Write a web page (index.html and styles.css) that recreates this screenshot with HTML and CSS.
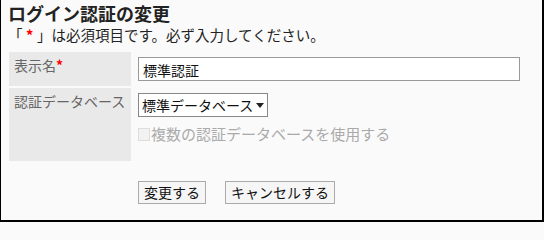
FILE: index.html
```html
<!DOCTYPE html>
<html lang="ja">
<head>
<meta charset="utf-8">
<link rel="stylesheet" href="styles.css">
</head>
<body>
<div class="frame">
  <h1 class="title">ログイン認証の変更</h1>
  <p class="note">「<span class="req wide">*</span>」は必須項目です。必ず入力してください。</p>
  <div class="form">
    <div class="label">表示名<span class="req">*</span></div>
    <div class="value"><div class="input">標準認証</div></div>
    <div class="label">認証データベース</div>
    <div class="value">
      <div class="select">標準データベース<span class="arrow"></span></div>
      <div class="check"><span class="box"></span>複数の認証データベースを使用する</div>
    </div>
  </div>
  <div class="buttons">
    <div class="btn">変更する</div>
    <div class="btn">キャンセルする</div>
  </div>
</div>
</body>
</html>
```

FILE: styles.css
```css
html, body {
  margin: 0;
  padding: 0;
  background: #fafafa;
}
body {
  font-family: "Noto Sans CJK JP", "Noto Sans", sans-serif;
  font-size: 14px;
  color: #222;
}
.frame {
  box-sizing: border-box;
  width: 544px;
  height: 222px;
  border-left: 1px solid #000;
  border-right: 2px solid #000;
  border-bottom: 2px solid #000;
  padding: 2px 0 0 7px;
  background: #fafafa;
}
.title {
  margin: 0;
  font-size: 18px;
  font-weight: bold;
  line-height: 22px;
  color: #222;
}
.note {
  margin: 0;
  padding-top: 1px;
  font-size: 14.5px;
  line-height: 20px;
  color: #222;
  white-space: nowrap;
}
.req {
  color: #f00;
  font-weight: bold;
}
.wide {
  display: inline-block;
  width: 14.5px;
  text-align: center;
}
.form {
  display: grid;
  grid-template-columns: 122px 1fr;
  grid-template-rows: 34px 73px;
  column-gap: 7px;
  row-gap: 2px;
  margin-top: 7px;
  margin-left: 1px;
}
.label {
  background: #e9e9e9;
  color: #666;
  padding: 3px 0 0 5px;
  line-height: 20px;
  white-space: nowrap;
}
.value {
  padding-top: 5px;
}
.input {
  box-sizing: border-box;
  width: 382px;
  height: 24px;
  border: 1px solid #999;
  background: #fff;
  padding: 3px 0 0 4px;
  line-height: 18px;
  color: #111;
}
.select {
  box-sizing: border-box;
  display: flex;
  align-items: center;
  width: 130px;
  height: 24px;
  border: 1px solid #888;
  background: #fff;
  padding: 0 0 0 3px;
  line-height: 18px;
  color: #111;
  white-space: nowrap;
}
.arrow {
  display: inline-block;
  margin-left: 3px;
  width: 0;
  height: 0;
  border-left: 4px solid transparent;
  border-right: 4px solid transparent;
  border-top: 5px solid #222;
}
.check {
  display: flex;
  align-items: center;
  margin-top: 8px;
  color: #aaa;
  font-size: 15px;
  line-height: 18px;
  white-space: nowrap;
}
.box {
  box-sizing: border-box;
  width: 12px;
  height: 13px;
  border: 1px solid #ddd;
  background: #f2f2f2;
  margin-right: 1px;
}
.buttons {
  display: flex;
  gap: 19px;
  margin-top: 20px;
  margin-left: 130px;
}
.btn {
  box-sizing: border-box;
  height: 23px;
  border: 1px solid #aaa;
  background: #f6f6f6;
  padding: 0 5px;
  line-height: 21px;
  color: #111;
}
```
